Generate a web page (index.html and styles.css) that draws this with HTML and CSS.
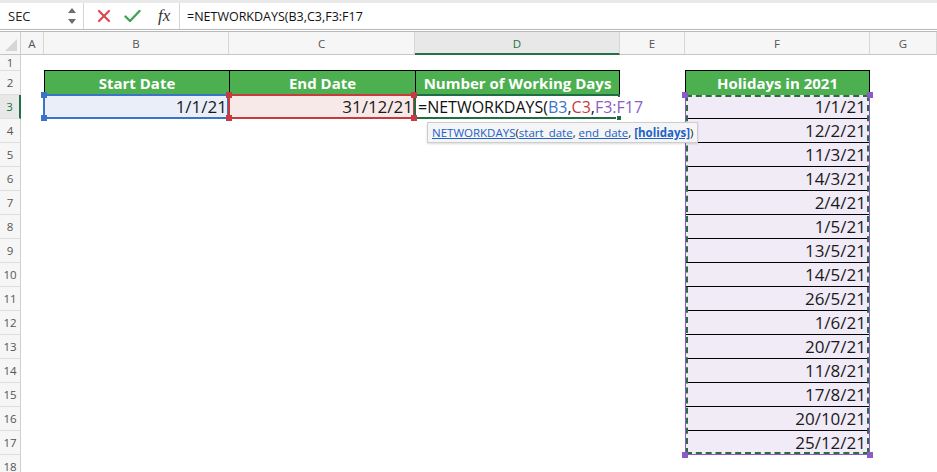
FILE: index.html
```html
<!DOCTYPE html>
<html>
<head>
<meta charset="utf-8">
<link rel="stylesheet" href="styles.css">
</head>
<body>
<div class="app">
  <div class="fbar">
    <div class="namebox">
      <span class="nb-text">SEC</span>
      <svg class="spin" width="10" height="20" viewBox="0 0 10 20"><path d="M1 7 L5 2 L9 7 Z" fill="#6b6b6b"/><path d="M1 13 L5 18 L9 13 Z" fill="#6b6b6b"/></svg>
    </div>
    <div class="fbtns">
      <svg width="14" height="14" viewBox="0 0 14 14"><path d="M2 2 L12 12 M12 2 L2 12" stroke="#e0454a" stroke-width="2.2" stroke-linecap="round"/></svg>
      <svg width="17" height="14" viewBox="0 0 17 14"><path d="M1.5 7.5 L6 12 L15.5 2" stroke="#3fa35a" stroke-width="2.4" fill="none" stroke-linecap="round" stroke-linejoin="round"/></svg>
      <span class="fx">fx</span>
    </div>
    <div class="formula">=NETWORKDAYS(B3,C3,F3:F17</div>
  </div>

  <div class="sheet">
    <div class="corner"><svg width="14" height="14" viewBox="0 0 14 14"><path d="M13 1 L13 13 L1 13 Z" fill="#d6d6d6"/></svg></div>
    <div class="ch">A</div>
    <div class="ch">B</div>
    <div class="ch">C</div>
    <div class="ch sel">D</div>
    <div class="ch">E</div>
    <div class="ch">F</div>
    <div class="ch last">G</div>

    <div class="rh">1</div>
    <div class="rh">2</div>
    <div class="rh sel">3</div>
    <div class="rh">4</div>
    <div class="rh">5</div>
    <div class="rh">6</div>
    <div class="rh">7</div>
    <div class="rh">8</div>
    <div class="rh">9</div>
    <div class="rh">10</div>
    <div class="rh">11</div>
    <div class="rh">12</div>
    <div class="rh">13</div>
    <div class="rh">14</div>
    <div class="rh">15</div>
    <div class="rh">16</div>
    <div class="rh">17</div>
    <div class="rh">18</div>

    <div class="th colB">Start Date</div>
    <div class="th colC">End Date</div>
    <div class="th colD">Number of Working Days</div>
    <div class="th colF">Holidays in 2021</div>

    <div class="cell ref-b colB">1/1/21<span class="h tl"></span><span class="h bl"></span></div>
    <div class="cell ref-c colC">31/12/21<span class="h tl"></span><span class="h bl"></span><span class="h tr"></span><span class="h br"></span></div>
    <div class="cell active colD"><span class="fn">=NETWORKDAYS(<span class="b">B3</span>,<span class="c">C3</span>,<span class="f">F3:F17</span></span><span class="fill"></span></div>

    <div class="holidays">
      <div class="hd">1/1/21</div>
      <div class="hd">12/2/21</div>
      <div class="hd">11/3/21</div>
      <div class="hd">14/3/21</div>
      <div class="hd">2/4/21</div>
      <div class="hd">1/5/21</div>
      <div class="hd">13/5/21</div>
      <div class="hd">14/5/21</div>
      <div class="hd">26/5/21</div>
      <div class="hd">1/6/21</div>
      <div class="hd">20/7/21</div>
      <div class="hd">11/8/21</div>
      <div class="hd">17/8/21</div>
      <div class="hd">20/10/21</div>
      <div class="hd">25/12/21</div>
      <span class="ants"></span>
      <span class="ph tl"></span><span class="ph tr"></span><span class="ph bl"></span><span class="ph br"></span>
    </div>

    <div class="tip"><a>NETWORKDAYS</a>(<a>start_date</a>, <a>end_date</a>, <a class="bold">[holidays]</a>)</div>
  </div>
</div>
</body>
</html>
```

FILE: styles.css
```css
* { box-sizing: border-box; }
html, body { margin: 0; padding: 0; background: #fff; overflow: hidden; }
body { width: 937px; height: 472px; font-family: "Open Sans", "Liberation Sans", sans-serif; }

.app { width: 937px; height: 472px; overflow: hidden; }

/* formula bar */
.fbar {
  height: 32px;
  display: flex;
  align-items: center;
  border-top: 3px solid #e9e9e9;
  border-bottom: 3px double #b8b8b8;
  background: #fff;
}
.namebox {
  width: 84px;
  height: 100%;
  display: flex;
  align-items: center;
  justify-content: space-between;
  padding: 0 6px 0 8px;
  border-right: 1px solid #d6d6d6;
}
.nb-text { font-size: 13px; color: #222; }
.spin { display: block; }
.fbtns {
  width: 96px;
  height: 100%;
  display: flex;
  align-items: center;
  padding-left: 13px;
  border-right: 1px solid #d6d6d6;
}
.fbtns svg:first-child { margin-right: 13px; }
.fbtns svg:nth-child(2) { margin-right: 17px; }
.fx { font-family: "Liberation Serif", serif; font-style: italic; font-size: 17px; color: #333; }
.formula { padding-left: 7px; font-size: 12.5px; color: #111; }

/* sheet grid */
.sheet {
  position: relative;
  display: grid;
  grid-template-columns: 21px 23px 185px 186px 205px 65px 185px 67px;
  grid-template-rows: 23px 16px repeat(17, 24px);
}
.corner {
  grid-row: 1; grid-column: 1;
  background: #f6f6f6;
  border-right: 1px solid #cfcfcf;
  border-bottom: 1px solid #c6c6c6;
  display: flex; align-items: flex-end; justify-content: flex-end;
  padding: 0 2px 2px 0;
}
.corner svg { display: block; }
.ch {
  grid-row: 1;
  background: #f6f6f6;
  border-right: 1px solid #d6d6d6;
  border-bottom: 1px solid #c6c6c6;
  font-size: 11.5px;
  color: #555;
  padding-top: 1px;
  display: flex; align-items: center; justify-content: center;
}
.ch.sel {
  background: #e8e8e8;
  color: #217346;
  border-bottom: 2px solid #217346;
}
.rh {
  grid-column: 1;
  background: #f6f6f6;
  border-right: 1px solid #cfcfcf;
  border-bottom: 1px solid #dedede;
  font-size: 11.5px;
  color: #555;
  display: flex; align-items: center; justify-content: center;
}
.rh.sel {
  background: #e8e8e8;
  color: #217346;
  border-right: 2px solid #217346;
}

.colB { grid-column: 3; }
.colC { grid-column: 4; }
.colD { grid-column: 5; }
.colF { grid-column: 7; }

.th {
  grid-row: 3;
  background: #4caf50;
  color: #fff;
  font-weight: 700;
  font-size: 15px;
  display: flex; align-items: center; justify-content: center;
  border-top: 1px solid #000;
  border-left: 1px solid #000;
  margin-top: -1px;
}
.th.colD, .th.colF { border-right: 1px solid #000; }

.cell {
  grid-row: 4;
  position: relative;
  display: flex; align-items: center; justify-content: flex-end;
  font-size: 17px;
  color: #1a1a1a;
  padding-right: 0;
  white-space: nowrap;
  margin-top: -1px;
}
.ref-b { background: #e9eef8; border: 2px solid #3a74c9; margin-left: -1px; }
.ref-c { background: #f8e9e9; border: 2px solid #c73a3e; margin-left: -1px; }
.active {
  justify-content: flex-start;
  border: 2px solid #1f6e43;
  padding-left: 2px;
  margin-left: -1px;
  overflow: visible;
}
.fn { font-size: 16px; line-height: 20px; color: #111; background: #fff; padding-right: 2px; position: relative; z-index: 2; }
.fn .b { color: #3a74c9; }
.fn .c { color: #c73a3e; }
.fn .f { color: #8a5cc4; }

.h { position: absolute; width: 6px; height: 6px; z-index: 3; }
.ref-b .h { background: #3a74c9; }
.ref-c .h { background: #c73a3e; }
.h.tl { left: -4px; top: -4px; }
.h.bl { left: -4px; bottom: -4px; }
.h.tr { right: -4px; top: -4px; }
.h.br { right: -4px; bottom: -4px; }
.fill { position: absolute; right: -4px; bottom: -4px; width: 6px; height: 6px; background: #1f6e43; border: 1px solid #fff; z-index: 3; }

.holidays {
  grid-column: 7;
  grid-row: 4 / span 15;
  position: relative;
  display: flex;
  flex-direction: column;
  background: #f0ebf6;
  border-left: 1px solid #8a5cc4;
  border-right: 1px solid #8a5cc4;
  border-bottom: 1px solid #8a5cc4;
}
.hd {
  flex: 1;
  display: flex; align-items: center; justify-content: flex-end;
  padding-right: 3px;
  font-size: 17px;
  color: #1a1a1a;
  border-bottom: 1px solid #000;
}
.hd:last-of-type { border-bottom: none; }
.ants {
  position: absolute;
  inset: 0;
  border: 2px dashed #2e6b45;
  pointer-events: none;
}
.ph { position: absolute; width: 6px; height: 6px; background: #8a5cc4; }
.ph.tl { left: -4px; top: -3px; }
.ph.tr { right: -4px; top: -3px; }
.ph.bl { left: -4px; bottom: -4px; }
.ph.br { right: -4px; bottom: -4px; }

.tip {
  position: absolute;
  left: 427px;
  top: 90px;
  width: 271px;
  height: 21px;
  background: #f5f5f5;
  border: 1px solid #cdcdcd;
  box-shadow: 0 1px 2px rgba(0,0,0,0.15);
  font-size: 11.5px;
  line-height: 19px;
  color: #222;
  padding-left: 4px;
  white-space: nowrap;
  z-index: 5;
}
.tip a { color: #2161c8; text-decoration: underline; }
.tip a.bold { font-weight: 700; }
```
